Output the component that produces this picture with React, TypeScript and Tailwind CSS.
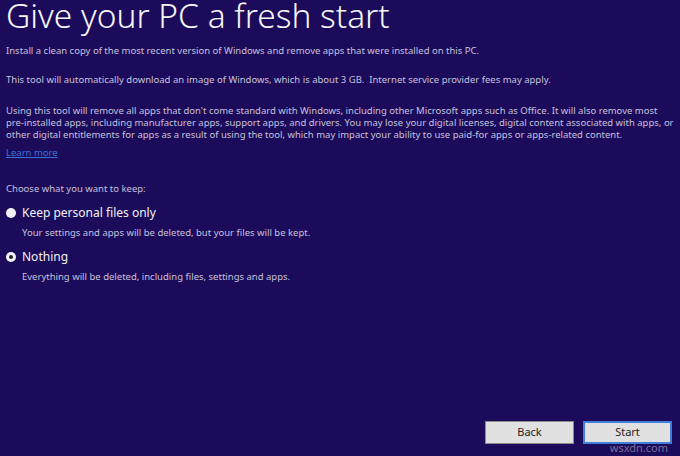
import React from "react";

const font = { fontFamily: '"Noto Sans", "Open Sans", sans-serif' };

type OptionProps = {
  label: string;
  hint: string;
  checked?: boolean;
  className?: string;
};

const Option = ({ label, hint, checked, className }: OptionProps) => {
  return (
    <div className={className}>
      <div className="flex items-center gap-[6px]">
        <span className="flex h-[10px] w-[10px] items-center justify-center rounded-full bg-[#f2f2f4]">
          {checked && <span className="h-[4px] w-[4px] rounded-full bg-[#222033]" />}
        </span>
        <span className="text-[12px] leading-[16px] text-[#f2f2f2]">{label}</span>
      </div>
      <p className="ml-[16px] mt-[6.5px] text-[9.5px] leading-[12px] text-[#c6c2dc]">{hint}</p>
    </div>
  );
};

export default function App() {
  return (
    <div style={font} className="relative flex h-[456px] w-[680px] flex-col overflow-hidden bg-[#1c0b5b] px-[6px]">
      <h1 className="text-[33.5px] font-light leading-[31px] text-[#f5f5f5]">Give your PC a fresh start</h1>

      <div className="flex flex-col text-[9.5px] leading-[12px] text-[#c6c2dc]">
        <p className="mt-[14px]">Install a clean copy of the most recent version of Windows and remove apps that were installed on this PC.</p>
        <p className="mt-[17px]">
          This tool will automatically download an image of Windows, which is about 3 GB.&nbsp; Internet service provider fees may apply.
        </p>
        <p className="mt-[18.5px]">
          Using this tool will remove all apps that don't come standard with Windows, including other Microsoft apps such as Office. It will also remove most
          <br />
          pre-installed apps, including manufacturer apps, support apps, and drivers. You may lose your digital licenses, digital content associated with apps, or
          <br />
          other digital entitlements for apps as a result of using the tool, which may impact your ability to use paid-for apps or apps-related content.
        </p>
        <a href="#" className="mt-[6px] self-start text-[#3b74d6] underline">
          Learn more
        </a>
        <p className="mt-[24.5px]">Choose what you want to keep:</p>
      </div>

      <Option className="mt-[9.5px]" label="Keep personal files only" hint="Your settings and apps will be deleted, but your files will be kept." />
      <Option className="mt-[9.5px]" label="Nothing" hint="Everything will be deleted, including files, settings and apps." checked />

      <div className="mb-[12px] mt-auto flex justify-end gap-[9px] pr-[2px]">
        <button className="h-[23px] w-[89px] border border-[#8c8c8c] bg-[#e1e1e1] text-[11px] text-[#1e1e1e]">Back</button>
        <button className="h-[23px] w-[89px] border-2 border-[#3f7fd9] bg-[#e1e1e1] text-[11px] text-[#1e1e1e]">Start</button>
      </div>

      <span className="absolute bottom-[3px] right-[12px] text-[11px] leading-none text-[#b8b6c6]/60">wsxdn.com</span>
    </div>
  );
}
